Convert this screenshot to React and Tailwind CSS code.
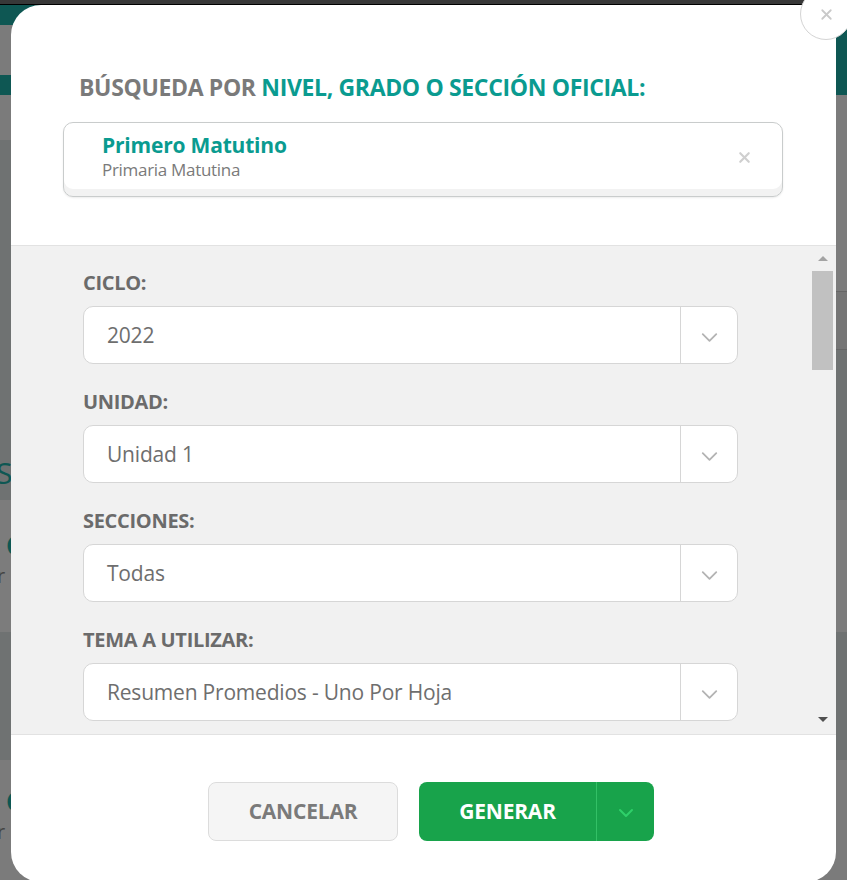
import { X, ChevronDown } from "lucide-react";

const font = { fontFamily: '"Open Sans", "Noto Sans", sans-serif' };

function SelectField({ label, value }) {
  return (
    <div className="mb-[27px]">
      <div className="text-[20px] leading-[22px] font-bold text-[#6b6b6b] mb-[12px] tracking-[-0.3px]">{label}</div>
      <div className="flex h-[58px] w-[655px] rounded-[10px] border border-[#d6d6d6] bg-white">
        <div className="flex-1 flex items-center pl-[23px] pt-[2px] text-[21px] text-[#6e6e6e] tracking-[-0.2px]">{value}</div>
        <div className="w-[57px] border-l border-[#d6d6d6] flex items-center justify-center">
          <ChevronDown size={27} strokeWidth={1.6} className="text-[#b3b3b3] mt-[4px]" />
        </div>
      </div>
    </div>
  );
}

function Backdrop() {
  return (
    <div className="w-[847px] h-[880px] overflow-hidden">
      <div className="h-[4px] bg-[#383838]" />
      <div className="h-[1px] bg-black" />
      <div className="h-[20px] bg-[#0e5753]" />
      <div className="flex h-[70px]">
        <div className="w-[60px] flex flex-col">
          <div className="h-[50px] bg-[#7b7b7b]" />
          <div className="h-[20px] bg-[#0e5753]" />
        </div>
        <div className="flex-1 bg-[#0e5753]" />
      </div>
      <div className="flex h-[405px]">
        <div className="w-[60px] flex flex-col">
          <div className="h-[45px] bg-[#7b7b7b]" />
          <div className="flex-1 bg-[#6f7272] pt-[318px]">
            <span className="text-[30px] leading-[30px] text-[#0e5753] -ml-[4px]">S</span>
          </div>
        </div>
        <div className="flex-1 flex flex-col">
          <div className="h-[197px] bg-[#7c7c7c] border-b border-[#666]" />
          <div className="h-[58px] bg-[#757575] border-b border-[#666]" />
          <div className="flex-1 bg-[#6f7272]" />
        </div>
      </div>
      <div className="h-[132px] bg-[#7c7c7c] pt-[30px]">
        <div className="text-[26px] leading-[30px] font-bold text-[#0e5753] pl-[6px]">C</div>
        <div className="text-[20px] leading-[24px] text-[#444] -ml-[3px] mt-[4px]">r</div>
      </div>
      <div className="h-[128px] bg-[#6f7272]" />
      <div className="h-[120px] bg-[#7b7b7b] pt-[26px]">
        <div className="text-[26px] leading-[30px] font-bold text-[#0e5753] pl-[6px]">C</div>
        <div className="text-[20px] leading-[24px] text-[#444] -ml-[3px] mt-[4px]">r</div>
      </div>
    </div>
  );
}

export default function App() {
  const fields = [
    { label: "CICLO:", value: "2022" },
    { label: "UNIDAD:", value: "Unidad 1" },
    { label: "SECCIONES:", value: "Todas" },
    { label: "TEMA A UTILIZAR:", value: "Resumen Promedios - Uno Por Hoja" },
    { label: "FORMATO:", value: "PDF" },
  ];

  return (
    <div className="relative w-[847px] h-[880px] overflow-hidden" style={font}>
      <Backdrop />

      {/* modal */}
      <div className="absolute left-[11px] top-[5px] w-[825px] h-[877px] rounded-[30px] bg-white overflow-hidden flex flex-col">
        <div className="pt-[67px] pl-[68px] text-[23px] leading-[30px] font-bold tracking-[-0.35px] whitespace-nowrap">
          <span className="text-[#7a7a7a]">BÚSQUEDA POR </span>
          <span className="text-[#0a9b90]">NIVEL, GRADO O SECCIÓN OFICIAL:</span>
        </div>

        <div className="ml-[52px] mt-[20px] w-[720px] h-[75px] rounded-[10px] border border-[#c9cccc] bg-white shadow-[inset_0_-7px_0_#f2f2f2,0_1px_2px_rgba(0,0,0,0.08)] flex items-start">
          <div className="flex-1 pl-[38px] pt-[9px]">
            <div className="text-[21px] leading-[26px] font-bold text-[#0a9b90] tracking-[-0.2px]">Primero Matutino</div>
            <div className="text-[17px] leading-[22px] text-[#7a7a7a] tracking-[-0.3px] mt-[1px]">Primaria Matutina</div>
          </div>
          <div className="pr-[29px] pt-[26px]">
            <X size={17} strokeWidth={3} className="text-[#cfcfcf]" />
          </div>
        </div>

        <div className="mt-[48px] h-[490px] border-t border-b border-[#e2e2e2] bg-[#f1f1f1] flex">
          <div className="flex-1 pl-[72px] pt-[26px] overflow-hidden">
            {fields.map((f) => (
              <SelectField key={f.label} label={f.label} value={f.value} />
            ))}
          </div>
          <div className="w-[23px] mr-[2px] bg-[#f1f1f1] flex flex-col items-center">
            <div className="mt-[10px] w-0 h-0 border-l-[5px] border-r-[5px] border-b-[5px] border-l-transparent border-r-transparent border-b-[#a3a3a3]" />
            <div className="mt-[10px] w-[21px] h-[99px] bg-[#c1c1c1]" />
            <div className="mt-auto mb-[12px] w-0 h-0 border-l-[5px] border-r-[5px] border-t-[5px] border-l-transparent border-r-transparent border-t-[#505050]" />
          </div>
        </div>

        <div className="flex pl-[197px] pt-[47px] gap-[21px]">
          <button className="w-[190px] h-[59px] rounded-[8px] border border-[#dcdcdc] bg-[#f5f5f5] text-[21px] font-bold text-[#7a7a7a] tracking-[-0.2px]">
            CANCELAR
          </button>
          <div className="flex w-[235px] h-[59px] rounded-[8px] bg-[#18a34b] overflow-hidden">
            <button className="w-[178px] text-[21px] font-bold text-white border-r border-[#33c066] tracking-[-0.2px]">GENERAR</button>
            <div className="flex-1 flex items-center justify-center">
              <ChevronDown size={24} strokeWidth={2} className="text-[#2fd06a] mt-[2px]" />
            </div>
          </div>
        </div>
      </div>

      {/* close button */}
      <div className="absolute left-[800px] top-[-12px] w-[52px] h-[52px] rounded-full bg-white border border-[#d4d4d4] flex items-center justify-center">
        <X size={17} strokeWidth={2.5} className="text-[#c9c9c9]" />
      </div>
    </div>
  );
}
